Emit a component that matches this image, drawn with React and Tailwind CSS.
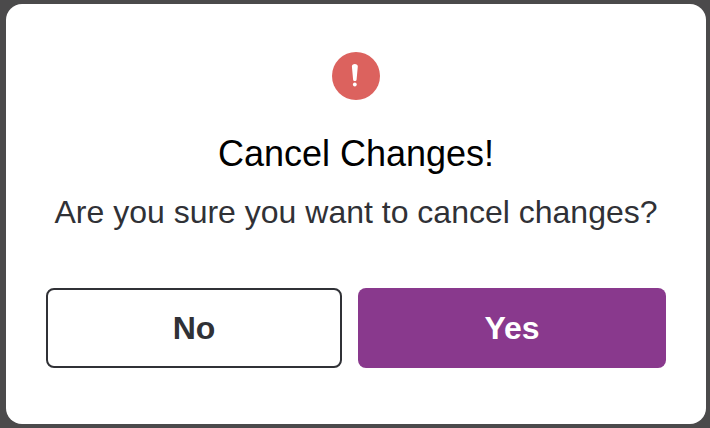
export default function App() {
  return (
    <main className="flex min-h-screen flex-col bg-[#4b4a4b] py-1 pr-1 pl-1.5 font-['Liberation_Sans',Arial,sans-serif]">
      <section
        role="alertdialog"
        aria-labelledby="dialog-title"
        aria-describedby="dialog-message"
        className="flex grow flex-col items-center rounded-2xl bg-white px-10 pt-12 pb-14"
      >
        <svg className="size-12" viewBox="0 0 48 48" aria-hidden="true">
          <circle cx="24" cy="24" r="24" fill="#dc625e" />
          <path
            d="M19.9 14.6C19.8 13 21 12 22.8 12S25.900 13 25.800 14.600L24.600 27.400C24.500 28.500 23.800 29.100 22.800 29.100S21.200 28.500 21.100 27.400Z"
            fill="white"
          />
          <circle cx="22.8" cy="32.5" r="1.9" fill="white" />
        </svg>
        <h1 id="dialog-title" className="mt-8 text-center text-4xl leading-11 text-black">
          Cancel Changes!
        </h1>
        <p id="dialog-message" className="mt-4 text-center text-[32px] leading-10 text-[#303136]">
          Are you sure you want to cancel changes?
        </p>
        <div className="mt-14 grid w-full grid-cols-[74fr_77fr] gap-4 text-[32px] font-bold">
          <button type="button" className="h-20 rounded-lg border-2 border-[#303136] bg-white text-[#303136]">
            No
          </button>
          <button type="button" className="h-20 rounded-lg bg-[#89398d] text-white">
            Yes
          </button>
        </div>
      </section>
    </main>
  );
}
